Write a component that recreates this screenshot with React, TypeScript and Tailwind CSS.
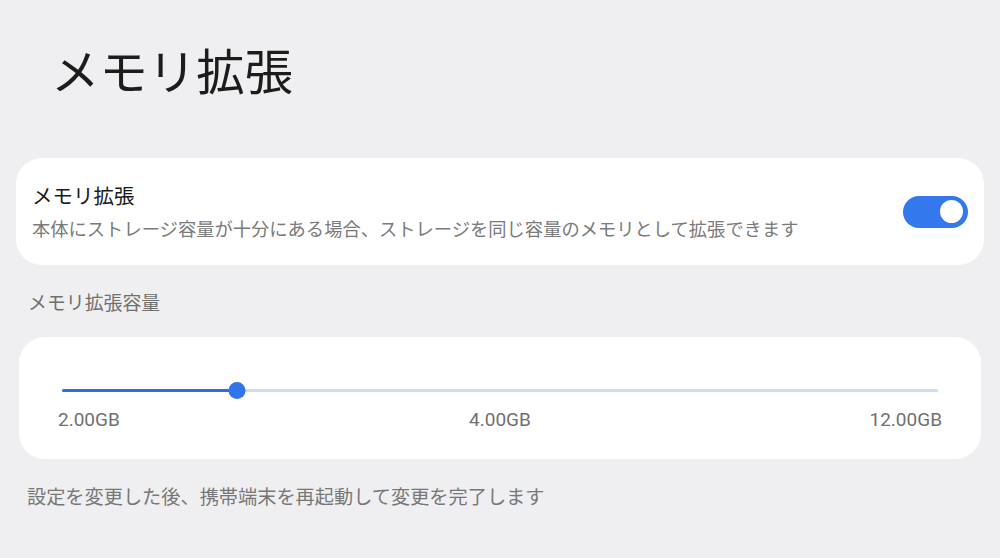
import React from 'react';

const jp = { fontFamily: '"Noto Sans CJK JP", "Noto Sans", sans-serif' };

const Toggle: React.FC<{ on: boolean }> = ({ on }) => (
  <div
    className={`w-[65px] h-[32px] rounded-full flex items-center shrink-0 ${
      on ? 'bg-[#3478ee] justify-end' : 'bg-[#c9c9cc] justify-start'
    }`}
  >
    <div className="w-[23px] h-[23px] rounded-full bg-white mx-[5px]" />
  </div>
);

const MemorySlider: React.FC<{ percent: number; labels: string[] }> = ({ percent, labels }) => (
  <div className="flex flex-col">
    <div className="mx-[43px] h-[17px] relative flex items-center">
      <div className="w-full h-[3px] rounded-full bg-[#cadcf7]" />
      <div
        className="absolute left-0 h-[3px] rounded-full bg-[#2f6fdd]"
        style={{ width: `${percent}%` }}
      />
      <div
        className="absolute w-[17px] h-[17px] rounded-full bg-[#2f74ea] -translate-x-1/2"
        style={{ left: `${percent}%` }}
      />
    </div>
    <div
      className="mt-[10px] px-[39px] grid grid-cols-3 text-[19px] leading-[22px] text-[#707070]"
      style={{ fontFamily: 'Roboto, "Liberation Sans", sans-serif' }}
    >
      <span className="text-left">{labels[0]}</span>
      <span className="text-center">{labels[1]}</span>
      <span className="text-right">{labels[2]}</span>
    </div>
  </div>
);

export default function App() {
  return (
    <div className="w-[1000px] h-[558px] bg-[#efeff1] flex flex-col overflow-hidden" style={jp}>
      {/* Page title */}
      <h1 className="pt-[45px] pl-[51px] text-[48.4px] leading-[48px] font-normal text-[#1c1c1c]">
        メモリ拡張
      </h1>

      {/* Switch card */}
      <div className="mt-[65px] mx-[16px] h-[107px] bg-white rounded-[26px] flex items-center justify-between pl-[16px] pr-[16px]">
        <div className="flex flex-col">
          <span className="text-[20.5px] leading-[20px] text-[#1a1a1a]">メモリ拡張</span>
          <span className="mt-[14px] text-[18.3px] leading-[19px] text-[#7a7a7a]">
            本体にストレージ容量が十分にある場合、ストレージを同じ容量のメモリとして拡張できます
          </span>
        </div>
        <Toggle on />
      </div>

      {/* Capacity */}
      <div className="mt-[27px] pl-[28px] text-[18.9px] leading-[19px] text-[#6f6f6f]">メモリ拡張容量</div>

      <div className="mt-[26px] mx-[19px] h-[122px] bg-white rounded-[26px] pt-[45px]">
        <MemorySlider percent={20} labels={['2.00GB', '4.00GB', '12.00GB']} />
      </div>

      <p className="mt-[28px] pl-[27px] text-[19.2px] leading-[19px] text-[#777777]">
        設定を変更した後、携帯端末を再起動して変更を完了します
      </p>
    </div>
  );
}
